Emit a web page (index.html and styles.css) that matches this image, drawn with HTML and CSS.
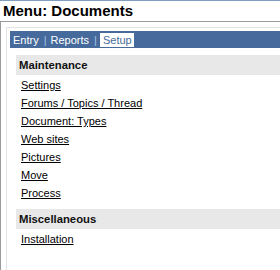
FILE: index.html
```html
<!DOCTYPE html>
<html>
<head>
<meta charset="utf-8">
<title>Menu: Documents</title>
<link rel="stylesheet" href="styles.css">
</head>
<body>
<div class="page">
  <div class="title">Menu: Documents</div>
  <div class="frame">
    <div class="box">
      <div class="nav">
        <a href="#" class="nav-link">Entry</a><span class="sep">|</span><a href="#" class="nav-link">Reports</a><span class="sep">|</span><a href="#" class="nav-link active">Setup</a>
      </div>
      <div class="content">
        <div class="section">
          <div class="section-head">Maintenance</div>
          <ul class="links">
            <li><a href="#">Settings</a></li>
            <li><a href="#">Forums / Topics / Thread</a></li>
            <li><a href="#">Document: Types</a></li>
            <li><a href="#">Web sites</a></li>
            <li><a href="#">Pictures</a></li>
            <li><a href="#">Move</a></li>
            <li><a href="#">Process</a></li>
          </ul>
        </div>
        <div class="section">
          <div class="section-head">Miscellaneous</div>
          <ul class="links">
            <li><a href="#">Installation</a></li>
          </ul>
        </div>
      </div>
    </div>
  </div>
</div>
</body>
</html>
```
FILE: styles.css
```css
*, *::before, *::after {
  box-sizing: border-box;
}
html, body {
  margin: 0;
  padding: 0;
  background: #fff;
}
body {
  font-family: "Liberation Sans", Arial, sans-serif;
  font-size: 11px;
  color: #000;
}
.page {
  width: 280px;
  height: 270px;
  display: flex;
  flex-direction: column;
}
.title {
  border-top: 1px solid #7f9fbf;
  height: 21px;
  line-height: 20px;
  padding-left: 3px;
  font-size: 15px;
  font-weight: bold;
  color: #000;
}
.frame {
  flex: 1;
  display: flex;
  border-top: 1px solid #9a9a9a;
  border-left: 1px solid #9a9a9a;
  padding: 5px 0 0 5px;
}
.box {
  flex: 1;
  border-top: 1px solid #e2e2e2;
  border-left: 1px solid #e2e2e2;
  padding: 3px 0 0 3px;
}
.nav {
  background: #466a9b;
  height: 17px;
  line-height: 16px;
  padding: 1px 0 0 3px;
  color: #fff;
  white-space: nowrap;
}
.nav-link {
  color: #fff;
  text-decoration: none;
}
.sep {
  color: #a7c2e6;
  margin: 0 4px 0 5px;
}
.nav-link.active {
  background: #fff;
  color: #466a9b;
  padding: 1px 2px 1px 3px;
  margin-left: -1px;
}
.content {
  margin-left: 6px;
  display: flex;
  flex-direction: column;
}
.section {
  margin-top: 7px;
}
.section-head {
  background: #e8e8e8;
  height: 20px;
  line-height: 20px;
  padding-left: 3px;
  font-size: 11.3px;
  font-weight: bold;
  color: #111;
}
.links {
  list-style: none;
  margin: 0;
  padding: 1px 0 0 5px;
}
.links li {
  height: 18px;
  line-height: 18px;
}
.links a {
  color: #000;
  text-decoration: underline;
}
```
